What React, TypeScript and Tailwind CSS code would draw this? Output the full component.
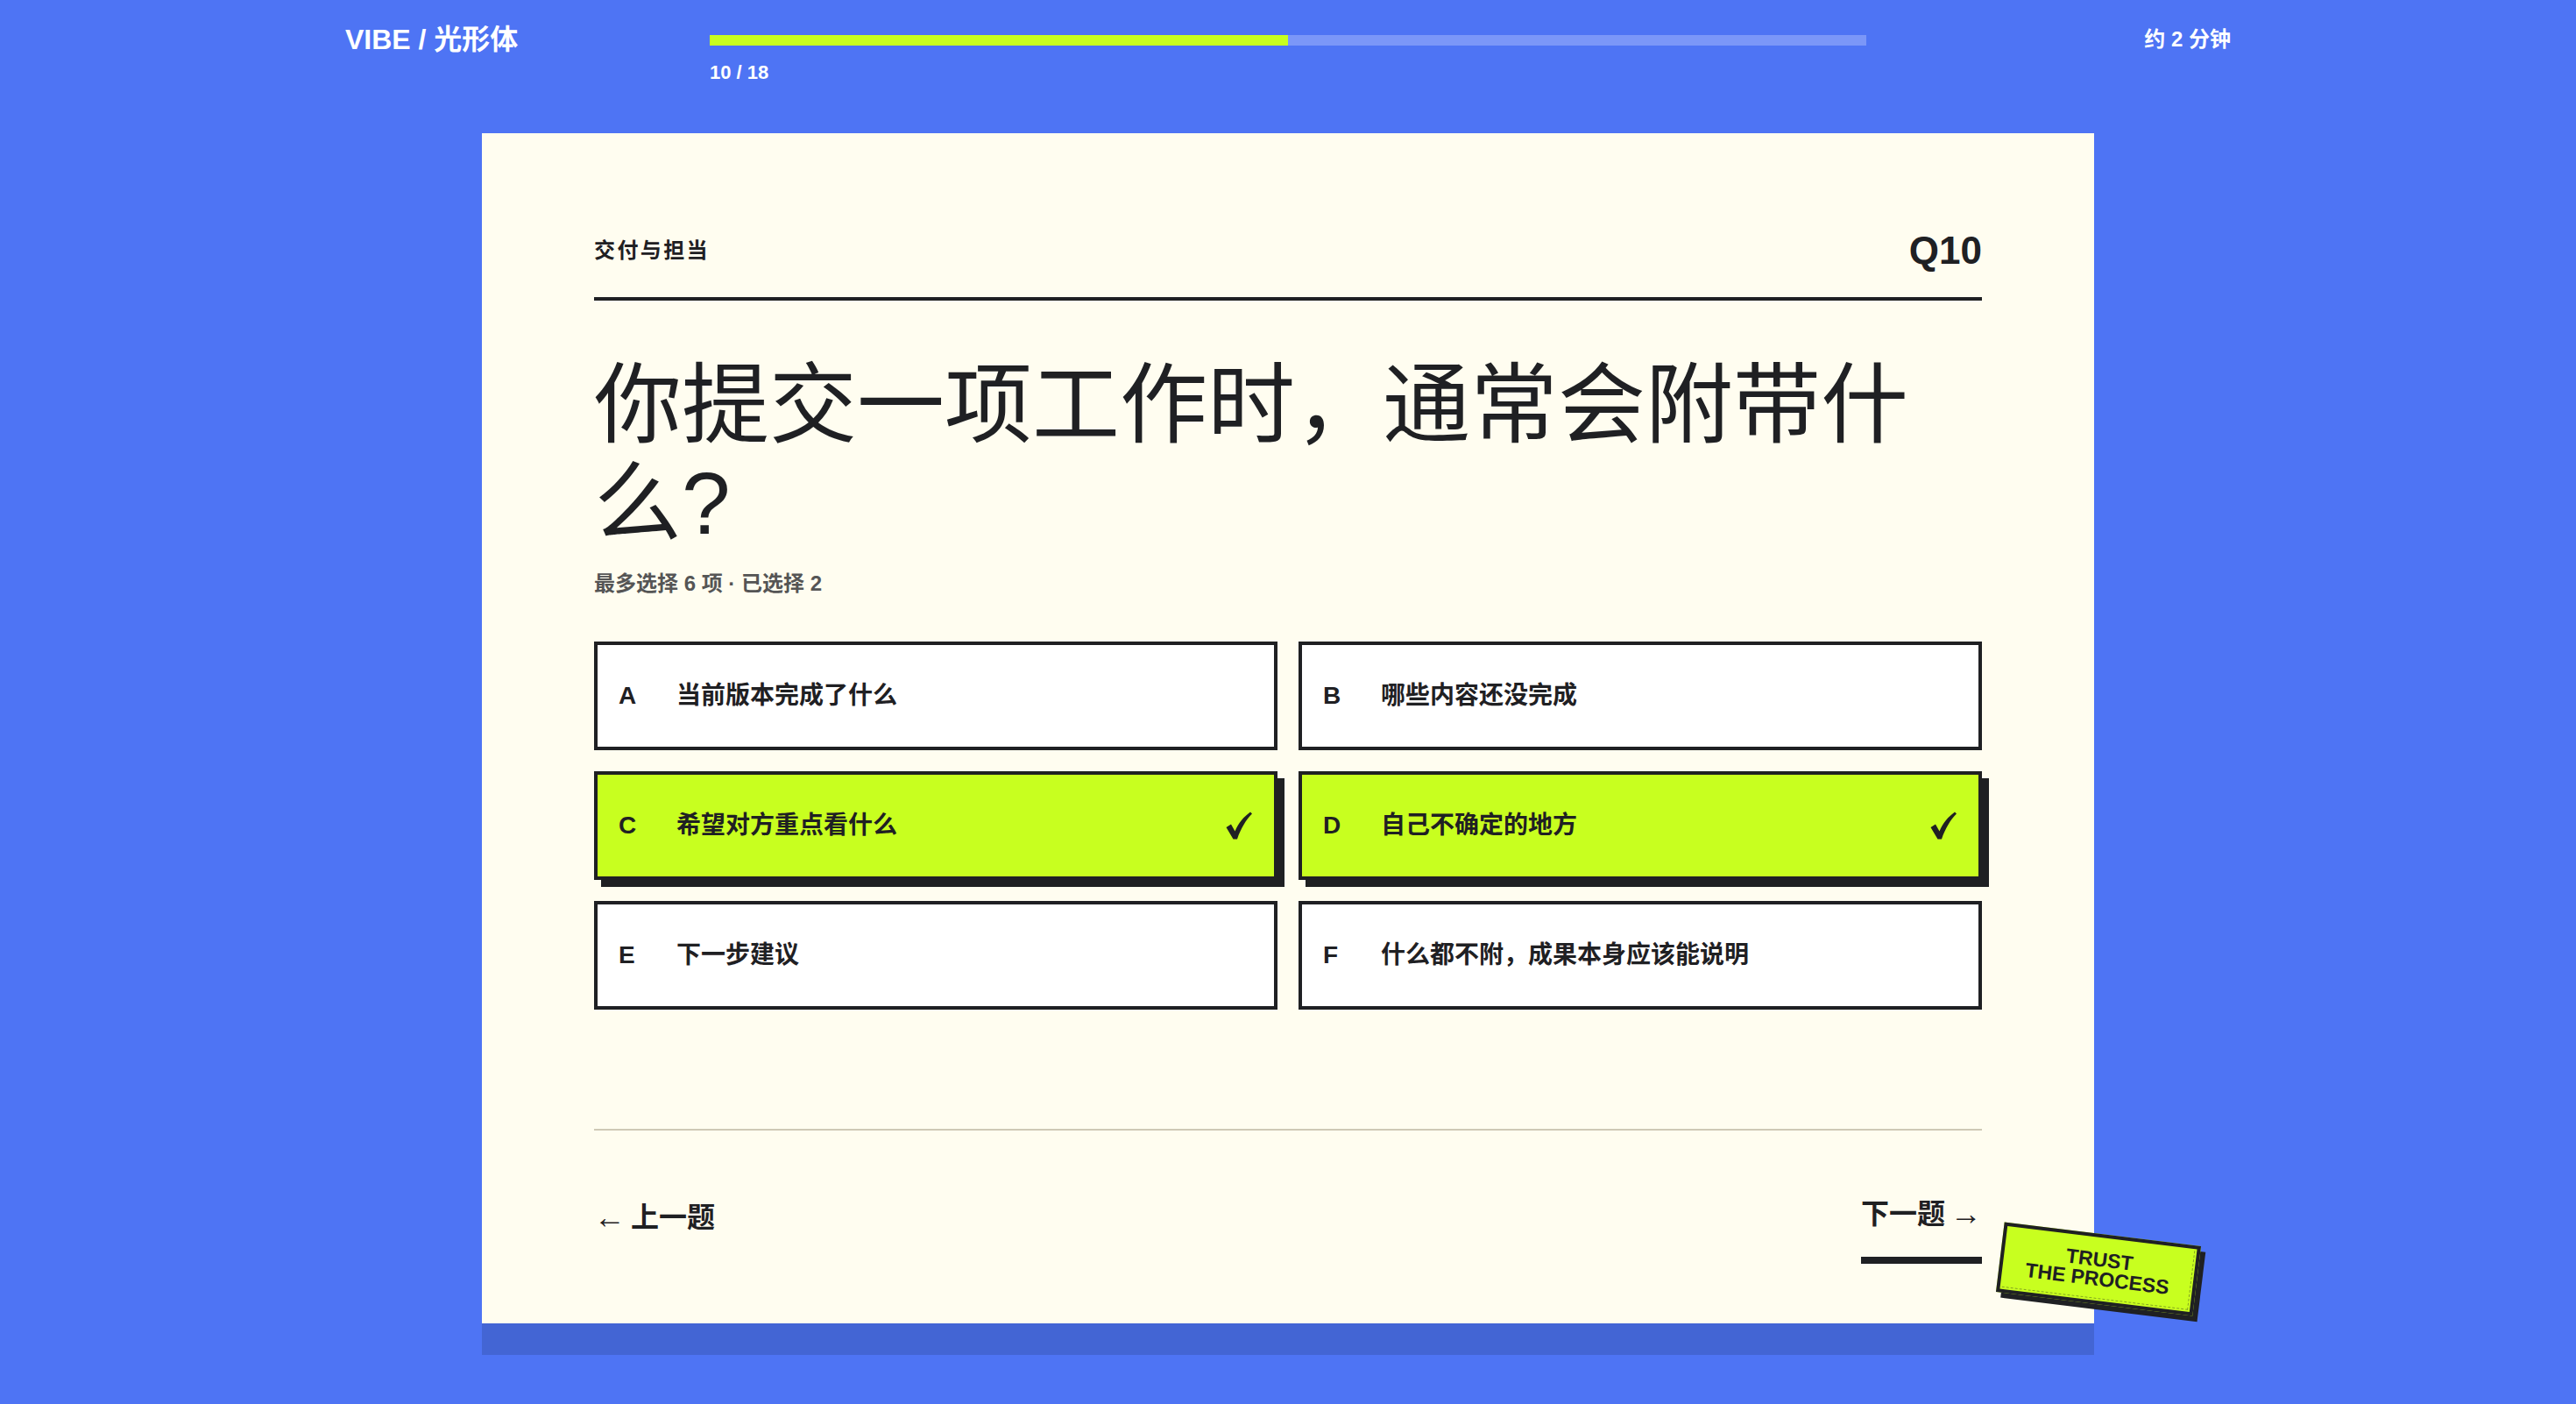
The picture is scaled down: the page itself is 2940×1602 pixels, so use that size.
import React from "react";

interface Option {
  key: string;
  label: string;
  selected: boolean;
}

const options: Option[] = [
  { key: "A", label: "当前版本完成了什么", selected: false },
  { key: "B", label: "哪些内容还没完成", selected: false },
  { key: "C", label: "希望对方重点看什么", selected: true },
  { key: "D", label: "自己不确定的地方", selected: true },
  { key: "E", label: "下一步建议", selected: false },
  { key: "F", label: "什么都不附，成果本身应该能说明", selected: false },
];

const font = "font-['Liberation_Sans','Noto_Sans_CJK_SC',sans-serif]";

const Check: React.FC = () => (
  <svg viewBox="0 0 32 32" className="w-[32px] h-[32px] text-[#1f2023]" fill="currentColor">
    <path d="M1.5 18 L7 14.5 L11.5 22.5 C15.5 13 21.5 6 29 0.5 L31 2.5 C24 9.5 18 19.5 14 31.5 L9.5 31.5 Z" />
  </svg>
);

const App: React.FC = () => {
  const current = 10;
  const total = 18;
  const progress = 50;

  return (
    <div className={`min-h-screen w-full bg-[#4e74f4] ${font}`}>
      {/* Top bar */}
      <header className="h-[152px] pt-[26px] px-[394px] grid grid-cols-[1fr_1320px_1fr] items-start">
        <div className="text-white text-[32px] leading-[38px] font-bold">VIBE / 光形体</div>
        <div className="mt-[14px]">
          <div className="h-[12px] w-full bg-[#7b97f8]">
            <div className="h-full bg-[#c8ff1f]" style={{ width: `${progress}%` }} />
          </div>
          <div className="mt-[18px] text-white text-[22px] leading-[26px] font-bold">
            {current} / {total}
          </div>
        </div>
        <div className="justify-self-end text-white text-[24px] leading-[38px] font-bold">约 2 分钟</div>
      </header>

      {/* Question card */}
      <main className="flex justify-center">
        <div className="relative w-[1840px] bg-[#fffdf0] shadow-[0_36px_0_#4365d4] px-[128px] pt-[112px] pb-[68px] text-[#1f2023]">
          <div className="flex justify-between items-center pb-[31px] border-b-4 border-[#1f2023]">
            <span className="text-[24px] leading-[32px] font-bold tracking-[2.4px]">交付与担当</span>
            <span className="text-[44px] leading-[44px] font-bold">Q10</span>
          </div>

          <h1 className="mt-[63px] text-[100px] leading-[112px] font-normal">
            你提交一项工作时，通常会附带什么?
          </h1>
          <p className="mt-[20px] text-[24px] leading-[32px] font-bold text-[#555555]">
            最多选择 6 项 · 已选择 2
          </p>

          <div className="mt-[50px] grid grid-cols-2 gap-[24px]">
            {options.map((o) => (
              <div
                key={o.key}
                className={
                  o.selected
                    ? "h-[124px] border-4 border-[#1f2023] bg-[#c8ff1f] shadow-[8px_8px_0_#1f2023] px-[24px] flex items-center"
                    : "h-[124px] border-4 border-[#1f2023] bg-white px-[24px] flex items-center"
                }
              >
                <span className="w-[66px] text-[28px] font-bold">{o.key}</span>
                <span className="flex-1 text-[28px] font-bold">{o.label}</span>
                {o.selected && <Check />}
              </div>
            ))}
          </div>

          {/* Footer nav */}
          <div className="mt-[136px] border-t-2 border-[#cfc9b6] pt-[75px] flex justify-between items-start">
            <button className="mt-[4px] flex items-center gap-[6px] text-[32px] leading-[40px] font-bold text-[#1f2023]">
              <span className="font-normal text-[36px]">←</span>
              <span>上一题</span>
            </button>
            <button className="flex items-center gap-[6px] text-[32px] leading-[40px] font-bold text-[#1f2023] pb-[29px] border-b-8 border-[#1f2023]">
              <span>下一题</span>
              <span className="font-normal text-[36px]">→</span>
            </button>
          </div>

          {/* Sticker */}
          <div className="absolute right-[-118px] bottom-[22px] w-[226px] h-[80px] rotate-[7deg] bg-[#c8ff1f] border-4 border-[#1f2023] shadow-[6px_6px_0_#1f2023] flex flex-col items-center justify-center">
            <div className="absolute left-[2px] right-[2px] bottom-[2px] top-[2px] border-b border-r border-dashed border-[#1f2023]/40" />
            <span className="text-[23px] leading-[22px] font-bold">TRUST</span>
            <span className="text-[23px] leading-[22px] font-bold">THE PROCESS</span>
          </div>
        </div>
      </main>
    </div>
  );
};

export default App;
